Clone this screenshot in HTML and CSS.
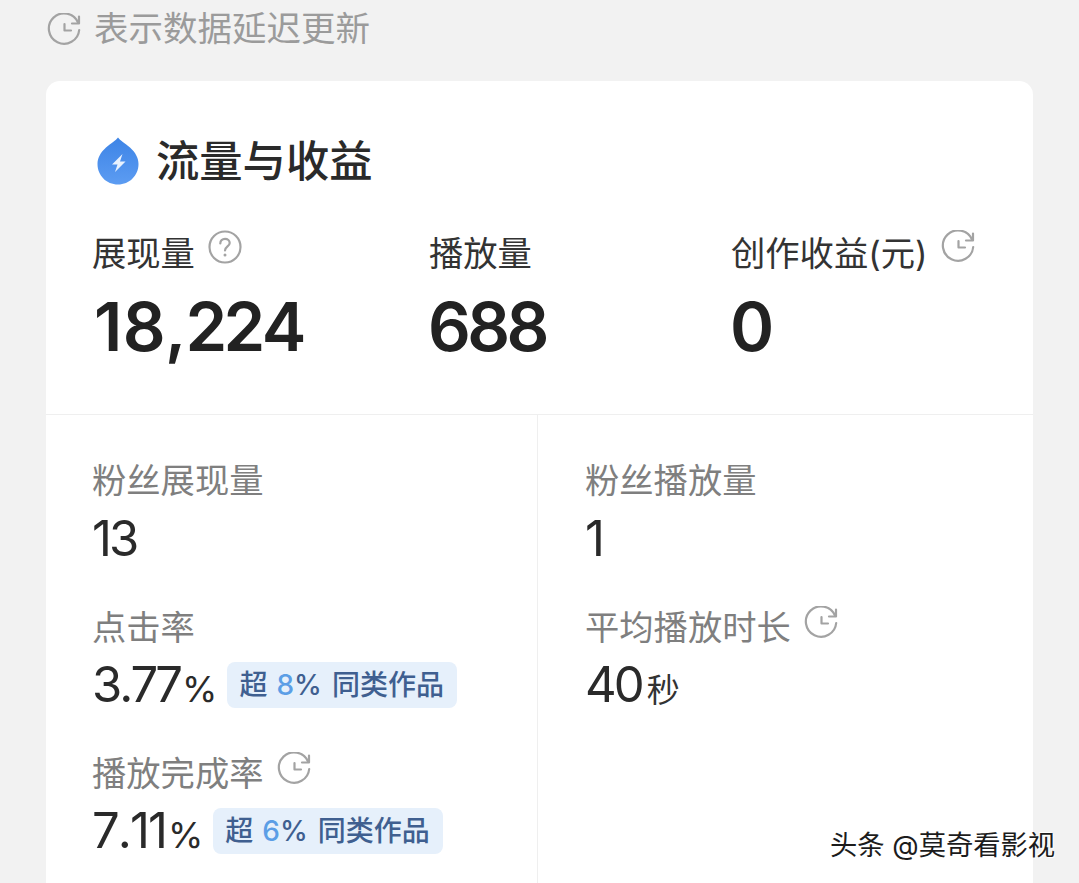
FILE: index.html
```html
<!DOCTYPE html>
<html lang="zh-CN">
<head>
<meta charset="utf-8">
<title>流量与收益</title>
<link rel="stylesheet" href="styles.css">
</head>
<body>
<svg class="defs" width="0" height="0" aria-hidden="true">
  <symbol id="clock" viewBox="0 0 34 34">
    <path d="M31 9.500A15.200 15.200 0 1 0 32.200 17" fill="none" stroke="currentColor" stroke-width="2.200" stroke-linecap="round"/>
    <path d="M32 3.500V10.500H25" fill="none" stroke="currentColor" stroke-width="2.200" stroke-linejoin="round" stroke-linecap="round"/>
    <path d="M17.500 11V17.500H24" fill="none" stroke="currentColor" stroke-width="2.200" stroke-linejoin="round" stroke-linecap="round"/>
  </symbol>
</svg>
<main class="page">
  <div class="notice">
    <svg class="icon notice-icon"><use href="#clock"/></svg>
    <span>表示数据延迟更新</span>
  </div>
  <section class="card">
    <div class="top">
      <h1 class="title">
        <svg class="drop" viewBox="0 0 42 48" aria-hidden="true">
          <defs>
            <linearGradient id="dropfill" x1="0" y1="0" x2="0" y2="1">
              <stop offset="0" stop-color="#3d84e6"/>
              <stop offset="1" stop-color="#5c9cf2"/>
            </linearGradient>
          </defs>
          <path d="M21 0.500C23 3.500 28 6 33 10.500C38.500 15.500 41.500 21 41.500 27C41.500 38.500 32.500 47.500 21 47.500C9.500 47.500 0.500 38.500 0.500 27C0.500 21 3.500 15.500 9 10.500C14 6 19 3.500 21 0.500Z" fill="url(#dropfill)"/>
          <path d="M25.500 17L15 27.500H20.500L18 35L28.500 24.500H23Z" fill="#e9f2fe"/>
        </svg>
        <span>流量与收益</span>
      </h1>
      <div class="main-stats">
        <div class="stat">
          <div class="label dark">展现量
            <svg class="icon raised" viewBox="0 0 34 34">
              <circle cx="17" cy="17" r="15.500" fill="none" stroke="currentColor" stroke-width="2.200"/>
              <path d="M12.300 13.500C12.300 10.700 14.300 8.900 17 8.900C19.700 8.900 21.700 10.600 21.700 13C21.700 16.300 17 16.600 17 20.500" fill="none" stroke="currentColor" stroke-width="2.200" stroke-linecap="round"/>
              <circle cx="17" cy="25" r="1.500" fill="currentColor"/>
            </svg>
          </div>
          <div class="big"><span class="one">1</span>8<span class="comma">,</span>224</div>
        </div>
        <div class="stat">
          <div class="label dark">播放量</div>
          <div class="big">688</div>
        </div>
        <div class="stat">
          <div class="label dark">创作收益(元)
            <svg class="icon raised"><use href="#clock"/></svg>
          </div>
          <div class="big">0</div>
        </div>
      </div>
    </div>
    <div class="bottom">
      <div class="col col-left">
        <div class="metric">
          <div class="label">粉丝展现量</div>
          <div class="value"><span class="num">13</span></div>
        </div>
        <div class="metric">
          <div class="label">点击率</div>
          <div class="value"><span class="num">3.77</span><span class="unit">%</span>
            <span class="badge">超<span class="pct"><b>8</b>%</span>同类作品</span></div>
        </div>
        <div class="metric">
          <div class="label">播放完成率
            <svg class="icon raised"><use href="#clock"/></svg>
          </div>
          <div class="value"><span class="num loose">7.11</span><span class="unit">%</span>
            <span class="badge">超<span class="pct"><b>6</b>%</span>同类作品</span></div>
        </div>
      </div>
      <div class="col col-right">
        <div class="metric">
          <div class="label">粉丝播放量</div>
          <div class="value"><span class="num">1</span></div>
        </div>
        <div class="metric">
          <div class="label">平均播放时长
            <svg class="icon raised"><use href="#clock"/></svg>
          </div>
          <div class="value"><span class="num">40</span><span class="unit-text">秒</span></div>
        </div>
      </div>
    </div>
  </section>
</main>
<div class="watermark">头条 @莫奇看影视</div>
</body>
</html>
```
FILE: styles.css
```css
* { box-sizing: border-box; }
html, body {
  margin: 0;
  height: 883px;
  overflow: hidden;
}
body {
  background: #f2f2f2;
  color: #222;
  font-family: "Inter", "Noto Sans CJK SC", sans-serif;
  position: relative;
}
.defs { position: absolute; }
.page { padding: 0 46px; }
.notice {
  height: 81px;
  padding: 11px 0 0 1px;
  display: flex;
  align-items: flex-start;
  gap: 13px;
  color: #9b9b9b;
  font-size: 34.500px;
  line-height: 36px;
}
.icon {
  width: 34px;
  height: 34px;
  color: #a3a3a3;
  flex: none;
}
.notice-icon { margin-top: 2px; }
.card {
  background: #fff;
  border-radius: 14px;
  height: 830px;
}
.top {
  height: 334px;
  padding: 50px 0 0 46px;
  border-bottom: 1px solid #efefef;
}
.title {
  margin: 0;
  display: flex;
  align-items: center;
  gap: 17px;
  font-size: 43.300px;
  line-height: 60px;
  font-weight: 500;
  color: #2a2a2a;
}
.drop {
  width: 42px;
  height: 48px;
  margin-left: 5px;
  flex: none;
}
.main-stats {
  display: grid;
  grid-template-columns: 337px 302px 1fr;
  margin-top: 40px;
}
.label {
  display: flex;
  align-items: flex-start;
  gap: 13px;
  font-size: 34.300px;
  line-height: 46px;
  color: #7f7f7f;
  white-space: nowrap;
}
.label.dark { color: #333; }
.raised { margin-top: -1px; }
.col .raised { margin-top: 1px; }
.big {
  font-size: 67px;
  line-height: 80px;
  font-weight: 600;
  font-kerning: none;
  letter-spacing: -0.055em;
  color: #222;
  margin-top: 10px;
  margin-left: -1px;
}
.one { margin: 0 4px 0 3px; }
.comma { margin: 0 3px; }
.bottom {
  display: grid;
  grid-template-columns: 492px 1fr;
  height: 480px;
}
.col {
  padding: 43px 0 0 46px;
  display: flex;
  flex-direction: column;
  gap: 26px;
}
.col-left { border-right: 1px solid #efefef; }
.col-right { padding-left: 47px; }
.metric { height: 120px; }
.metric + .metric .label { padding-top: 1px; height: 46px; }
.value {
  display: flex;
  align-items: baseline;
  height: 60px;
  margin-top: 5px;
  line-height: 60px;
}
.num {
  font-size: 49px;
  font-kerning: none;
  letter-spacing: -0.06em;
  color: #2a2a2a;
}
.num.loose { letter-spacing: -0.04em; }
.unit {
  font-size: 36px;
  margin-left: 2px;
  color: #2a2a2a;
}
.unit-text {
  font-size: 33px;
  margin-left: 5px;
  color: #333;
}
.badge {
  align-self: center;
  display: flex;
  margin-left: 10px;
  height: 46px;
  line-height: 46px;
  padding: 0 13px 0 12px;
  border-radius: 8px;
  background: #e6f0fb;
  color: #3f5f90;
  font-size: 28px;
  font-weight: 500;
  white-space: nowrap;
}
.pct { margin: 0 10px 0 9px; }
.badge b {
  font-weight: 500;
  color: #5b9ee6;
}
.watermark {
  position: absolute;
  left: 830px;
  top: 828px;
  font-size: 27.300px;
  line-height: 36px;
  color: #1c1c1c;
  white-space: nowrap;
  text-shadow: 1px 1px 0 #fff, -1px -1px 0 #fff;
}
```
